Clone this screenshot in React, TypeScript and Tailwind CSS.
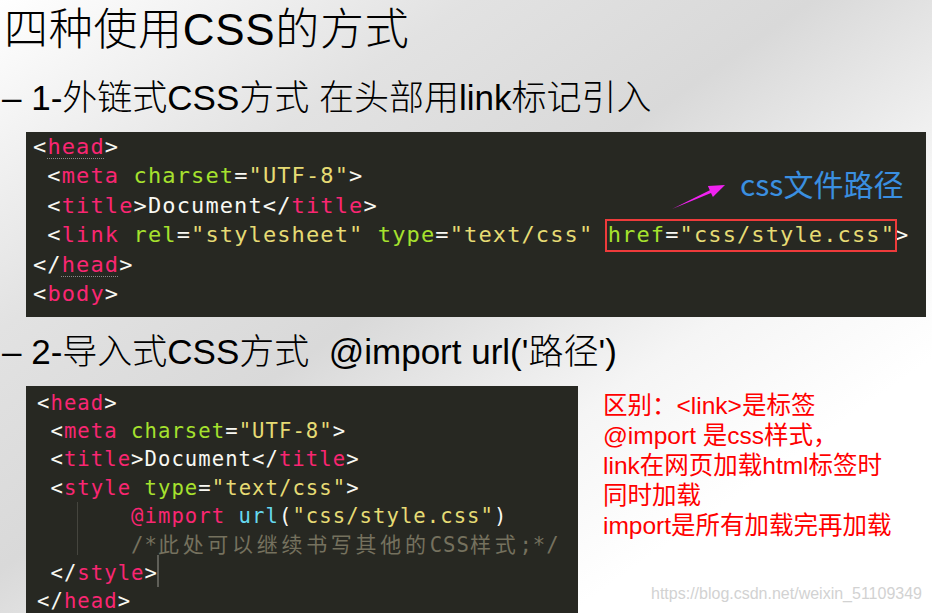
import React from "react";

const W = "text-[#f8f8f2]";
const P = "text-[#f92672]";
const G = "text-[#a6e22e]";
const Y = "text-[#e6db74]";
const B = "text-[#66d9ef]";
const C = "text-[#75715e]";

function S({ c, children }: { c: string; children: React.ReactNode }) {
  return <span className={c}>{children}</span>;
}

function Head() {
  return (
    <span className="text-[#f92672] underline decoration-dotted decoration-[#8a8a8a] decoration-1 underline-offset-[4px]">
      head
    </span>
  );
}

function Block1() {
  return (
    <div className="relative mt-[14px] ml-[26px] w-[900px] h-[185px] bg-[#272822] pl-[7px] font-['DejaVu_Sans_Mono',monospace] text-[22px] leading-[29.4px] tracking-[1.12px] whitespace-pre">
      <div>
        <S c={W}>&lt;</S>
        <Head />
        <S c={W}>&gt;</S>
      </div>
      <div>
        <S c={W}> &lt;</S>
        <S c={P}>meta</S> <S c={G}>charset</S>
        <S c={W}>=</S>
        <S c={Y}>"UTF-8"</S>
        <S c={W}>&gt;</S>
      </div>
      <div>
        <S c={W}> &lt;</S>
        <S c={P}>title</S>
        <S c={W}>&gt;Document&lt;/</S>
        <S c={P}>title</S>
        <S c={W}>&gt;</S>
      </div>
      <div>
        <S c={W}> &lt;</S>
        <S c={P}>link</S> <S c={G}>rel</S>
        <S c={W}>=</S>
        <S c={Y}>"stylesheet"</S> <S c={G}>type</S>
        <S c={W}>=</S>
        <S c={Y}>"text/css"</S>{" "}
        <span className="relative">
          <S c={G}>href</S>
          <S c={W}>=</S>
          <S c={Y}>"css/style.css"</S>
          <span className="absolute -left-[3px] -right-[2px] -top-[3px] -bottom-[5px] border-2 border-[#ee3b3b]" />
        </span>
        <S c={W}>&gt;</S>
      </div>
      <div>
        <S c={W}>&lt;/</S>
        <Head />
        <S c={W}>&gt;</S>
      </div>
      <div>
        <S c={W}>&lt;</S>
        <S c={P}>body</S>
        <S c={W}>&gt;</S>
      </div>

      <svg
        className="absolute left-[639px] top-[48px]"
        width="65"
        height="32"
        viewBox="0 0 65 32"
      >
        <polygon
          points="7,29 46,13 47.9,17.1 60,5 42.9,6.1 44.8,10.2"
          fill="#f022f0"
        />
      </svg>

      <div className="absolute left-[714px] top-[36px] font-['Microsoft_YaHei','Noto_Sans_CJK_SC',sans-serif] text-[30px] leading-[30px] tracking-normal text-[#3a8fe0]">
        css文件路径
      </div>
    </div>
  );
}

function Block2() {
  return (
    <div className="relative w-[552px] h-[240px] shrink-0 bg-[#272822] pl-[11px] pt-[2.5px] font-['DejaVu_Sans_Mono',monospace] text-[20.6px] leading-[28.4px] tracking-[1.04px] whitespace-pre">
      <div>
        <S c={W}>&lt;</S>
        <S c={P}>head</S>
        <S c={W}>&gt;</S>
      </div>
      <div>
        <S c={W}> &lt;</S>
        <S c={P}>meta</S> <S c={G}>charset</S>
        <S c={W}>=</S>
        <S c={Y}>"UTF-8"</S>
        <S c={W}>&gt;</S>
      </div>
      <div>
        <S c={W}> &lt;</S>
        <S c={P}>title</S>
        <S c={W}>&gt;Document&lt;/</S>
        <S c={P}>title</S>
        <S c={W}>&gt;</S>
      </div>
      <div>
        <S c={W}> &lt;</S>
        <S c={P}>style</S> <S c={G}>type</S>
        <S c={W}>=</S>
        <S c={Y}>"text/css"</S>
        <S c={W}>&gt;</S>
      </div>
      <div>
        {"       "}
        <S c={P}>@import</S> <S c={B}>url</S>
        <S c={W}>(</S>
        <S c={Y}>"css/style.css"</S>
        <S c={W}>)</S>
      </div>
      <div className={C}>
        {"       /*"}
        <span className="font-['Noto_Sans_CJK_SC',sans-serif] text-[21px] leading-none tracking-[3.7px]">
          此处可以继续书写其他的
        </span>
        CSS
        <span className="font-['Noto_Sans_CJK_SC',sans-serif] text-[21px] leading-none tracking-[3.7px]">
          样式
        </span>
        ;*/
      </div>
      <div>
        <S c={W}> &lt;/</S>
        <S c={P}>style</S>
        <S c={W}>&gt;</S>
      </div>
      <div>
        <S c={W}>&lt;/</S>
        <S c={P}>head</S>
        <S c={W}>&gt;</S>
      </div>

      <div className="absolute left-[51px] top-[116px] w-px h-[53px] bg-[#45453e]" />
      <div className="absolute left-[131px] top-[169px] w-[2px] h-[32px] bg-[#5f5f58]" />
    </div>
  );
}

export default function App() {
  return (
    <div className="relative w-[932px] h-[613px] overflow-hidden bg-[linear-gradient(145deg,#ffffff_0%,#e2e2e2_26%,#d9d9d9_45%,#f5f5f5_65%,#ffffff_80%)] font-['Liberation_Sans','Noto_Sans_CJK_SC',sans-serif] text-black">
      <div className="pl-[4px] pt-[4px] text-[44px] leading-[52px] font-light tracking-[0.7px] whitespace-nowrap">
        四种使用CSS的方式
      </div>
      <div className="mt-[22px] pl-[2px] text-[35px] leading-[40px] font-light whitespace-pre">
        – 1-外链式CSS方式 在头部用link标记引入
      </div>
      <Block1 />
      <div className="mt-[15px] pl-[2px] text-[35px] leading-[40px] font-light whitespace-pre">
        – 2-导入式CSS方式  @import url('路径')
      </div>
      <div className="mt-[14px] ml-[26px] flex">
        <Block2 />
        <div className="ml-[25px] pt-[5px] text-[24.5px] leading-[30px] text-[#ff0000] whitespace-nowrap">
          <div>区别：&lt;link&gt;是标签</div>
          <div>@import 是css样式，</div>
          <div>link在网页加载html标签时</div>
          <div>同时加载</div>
          <div>import是所有加载完再加载</div>
        </div>
      </div>
      <div className="absolute left-[651px] top-[585px] text-[16px] leading-[18px] text-[#d2d2d2]">
        https://blog.csdn.net/weixin_51109349
      </div>
    </div>
  );
}
